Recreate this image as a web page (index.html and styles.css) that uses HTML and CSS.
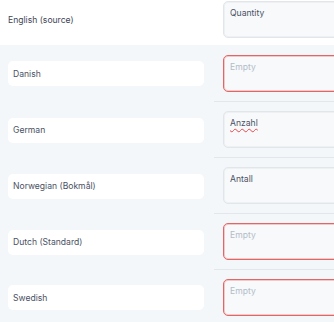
FILE: index.html
```html
<!DOCTYPE html>
<html>
<head>
<meta charset="utf-8">
<link rel="stylesheet" href="styles.css">
</head>
<body>
<div class="table">
  <div class="row source">
    <div class="lang-cell"><span class="lang-text">English (source)</span></div>
    <div class="value-cell"><div class="field">Quantity</div></div>
  </div>
  <div class="row">
    <div class="lang-cell"><div class="lang-box">Danish</div></div>
    <div class="value-cell"><div class="field-empty">Empty</div></div>
  </div>
  <div class="row">
    <div class="lang-cell"><div class="lang-box">German</div></div>
    <div class="value-cell"><div class="field"><span class="misspelled">Anzahl</span></div></div>
  </div>
  <div class="row">
    <div class="lang-cell"><div class="lang-box">Norwegian (Bokmål)</div></div>
    <div class="value-cell"><div class="field">Antall</div></div>
  </div>
  <div class="row">
    <div class="lang-cell"><div class="lang-box">Dutch (Standard)</div></div>
    <div class="value-cell"><div class="field-empty">Empty</div></div>
  </div>
  <div class="row">
    <div class="lang-cell"><div class="lang-box">Swedish</div></div>
    <div class="value-cell"><div class="field-empty">Empty</div></div>
  </div>
</div>
</body>
</html>
```
FILE: styles.css
```css
html, body {
  margin: 0;
  padding: 0;
  width: 334px;
  height: 322px;
  overflow: hidden;
  background: #f3f7fa;
  font-family: Inter, "Noto Sans", sans-serif;
  font-size: 8.6px;
  color: #4a5163;
}

.table {
  display: flex;
  flex-direction: column;
}

.row {
  display: grid;
  grid-template-columns: 214px 1fr;
  background: #f3f7fa;
}

.row.source {
  background: #ffffff;
}

.lang-cell {
  display: flex;
  align-items: center;
  padding: 0 10px 0 8px;
}

.row.source .lang-cell {
  padding-bottom: 6px;
}

.lang-text {
  color: #3e4556;
}

.lang-box {
  flex: 1;
  height: 25px;
  background: #ffffff;
  border-radius: 5px;
  display: flex;
  align-items: center;
  padding-left: 5px;
}

.value-cell {
  padding: 9px 0 9px 9px;
  border-bottom: 1px solid #e3e7ec;
  overflow: hidden;
}

.row.source .value-cell {
  padding: 1px 0 7px 9px;
  border-bottom: none;
}

.row:nth-child(2) .value-cell {
  padding-top: 10px;
}

.row:last-child .value-cell {
  border-bottom: none;
}

.field,
.field-empty {
  width: 140px;
  height: 37px;
  box-sizing: border-box;
  background: #f7f9fb;
  border-radius: 5px;
  padding: 6px 6px;
}

.field {
  border: 1px solid #e2e6ea;
  box-shadow: inset 0 0 0 1px rgba(226, 230, 234, 0.45);
  color: #4a5163;
}

.field-empty {
  border: 1px solid #e26666;
  box-shadow: inset 0 0 0 1px rgba(236, 140, 140, 0.45);
  color: #b4bcc8;
}

.misspelled {
  text-decoration: underline wavy #e5484d;
  text-decoration-thickness: 1px;
  text-underline-offset: 2px;
}
```
